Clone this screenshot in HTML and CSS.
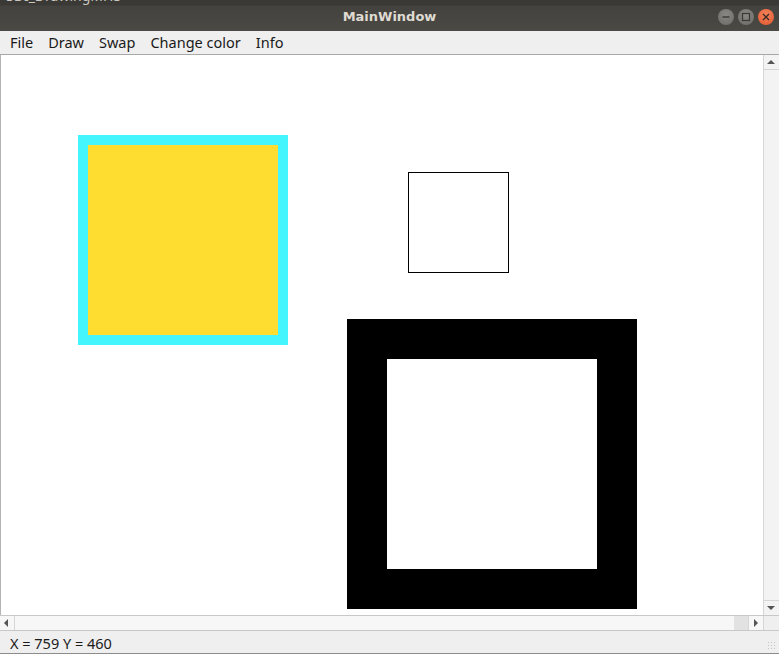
FILE: index.html
```html
<!DOCTYPE html>
<html>
<head>
<meta charset="utf-8">
<link rel="stylesheet" href="styles.css">
</head>
<body>
<div class="window">
  <div class="titlebar">
    <div class="ghost">SDI_DrawingMHS</div>
    <div class="title">MainWindow</div>
    <div class="controls">
      <span class="wbtn min"><svg width="16" height="16" viewBox="0 0 16 16"><line x1="4.5" y1="8" x2="11.5" y2="8" stroke="#3a3935" stroke-width="1.4"/></svg></span>
      <span class="wbtn max"><svg width="16" height="16" viewBox="0 0 16 16"><rect x="4.5" y="4.5" width="7" height="7" fill="none" stroke="#3a3935" stroke-width="1.2"/></svg></span>
      <span class="wbtn close"><svg width="16" height="16" viewBox="0 0 16 16"><path d="M5 5 L11 11 M11 5 L5 11" stroke="#3a2a22" stroke-width="1.4"/></svg></span>
    </div>
  </div>
  <div class="menubar">
    <span class="menu">File</span>
    <span class="menu">Draw</span>
    <span class="menu">Swap</span>
    <span class="menu">Change color</span>
    <span class="menu">Info</span>
  </div>
  <div class="main">
    <div class="canvas">
      <div class="shape cyan"></div>
      <div class="shape small"></div>
      <div class="shape black"></div>
    </div>
    <div class="vscroll">
      <div class="arrow up"></div>
      <div class="track"></div>
      <div class="arrow down"></div>
    </div>
  </div>
  <div class="hrow">
    <div class="hscroll">
      <div class="harrow left"></div>
      <div class="htrack"></div>
      <div class="hthumb"></div>
      <div class="harrow right"></div>
    </div>
    <div class="corner"></div>
  </div>
  <div class="statusbar">
    <span class="status">X = 759 Y = 460</span>
    <span class="grip"></span>
  </div>
  <div class="bottomedge"></div>
</div>
</body>
</html>
```
FILE: styles.css
```css
html, body {
  margin: 0;
  padding: 0;
  width: 779px;
  height: 654px;
  overflow: hidden;
  font-family: "Noto Sans", "DejaVu Sans", sans-serif;
}
.window {
  display: flex;
  flex-direction: column;
  width: 779px;
  height: 654px;
  background: #efefef;
}
.titlebar {
  position: relative;
  height: 31px;
  flex: none;
  background: linear-gradient(#3a3935 0px, #3a3935 5px, #43423e 6px, #4b4944 31px);
  display: flex;
  align-items: center;
  justify-content: center;
  overflow: hidden;
}
.ghost {
  position: absolute;
  left: 6px;
  top: -12px;
  color: #c8c6c0;
  font-size: 14px;
  line-height: 16px;
}
.title {
  color: #dfdbd2;
  font-weight: bold;
  font-size: 13px;
  font-family: "DejaVu Sans", sans-serif;
  margin-top: 2px;
}
.controls {
  position: absolute;
  right: 5px;
  top: 9px;
  display: flex;
  gap: 4px;
}
.wbtn {
  width: 16px;
  height: 16px;
  border-radius: 50%;
  display: block;
  background: radial-gradient(circle at 50% 35%, #8a8883, #6c6a66);
}
.wbtn svg { display: block; }
.wbtn.close {
  background: radial-gradient(circle at 50% 35%, #f4825c, #e2572d);
}
.menubar {
  height: 23px;
  flex: none;
  display: flex;
  align-items: center;
  padding-left: 2.5px;
  background: #efefef;
  border-bottom: 1px solid #a8a8a8;
  font-size: 14.5px;
  color: #1a1a1a;
}
.menu {
  padding: 0 7.5px;
  line-height: 23px;
}
.main {
  flex: none;
  height: 560px;
  display: flex;
}
.canvas {
  position: relative;
  flex: 1;
  background: #ffffff;
  border-left: 1px solid #b4b4b4;
}
.shape { position: absolute; box-sizing: border-box; }
.cyan {
  left: 77px; top: 80px;
  width: 210px; height: 210px;
  border: 10px solid #45f5fd;
  background: #fedd30;
}
.small {
  left: 407px; top: 117px;
  width: 101px; height: 101px;
  border: 1px solid #000;
  background: #fff;
}
.black {
  left: 346px; top: 264px;
  width: 290px; height: 290px;
  border: 40px solid #000;
  background: #fff;
}
.vscroll {
  width: 15px;
  flex: none;
  display: flex;
  flex-direction: column;
  background: #f3f3f3;
  border-left: 1px solid #d6d6d6;
}
.vscroll .track { flex: 1; }
.arrow {
  height: 14px;
  position: relative;
}
.arrow.up { border-bottom: 1px solid #d6d6d6; }
.arrow.down { border-top: 1px solid #d6d6d6; }
.arrow::after {
  content: "";
  position: absolute;
  left: 3px;
  border-left: 4px solid transparent;
  border-right: 4px solid transparent;
}
.arrow.up::after { top: 5px; border-bottom: 4px solid #555; }
.arrow.down::after { top: 5px; border-top: 4px solid #555; }
.hrow {
  height: 14px;
  flex: none;
  display: flex;
  border-top: 1px solid #c8c8c8;
  border-bottom: 1px solid #c8c8c8;
}
.hscroll {
  flex: 1;
  display: flex;
  background: #f7f7f7;
}
.htrack { flex: 1; }
.hthumb { width: 14px; background: #e2e2e2; }
.harrow {
  width: 14px;
  position: relative;
}
.harrow.left { border-right: 1px solid #d6d6d6; }
.harrow.right { border-left: 1px solid #d6d6d6; border-right: 1px solid #d6d6d6; }
.harrow::after {
  content: "";
  position: absolute;
  top: 3px;
  border-top: 4px solid transparent;
  border-bottom: 4px solid transparent;
}
.harrow.left::after { left: 4px; border-right: 4px solid #555; }
.harrow.right::after { left: 5px; border-left: 4px solid #555; }
.corner { width: 15px; background: #efefef; }
.statusbar {
  flex: 1;
  display: flex;
  align-items: center;
  padding-left: 10px;
  font-size: 14.5px;
  color: #1a1a1a;
  position: relative;
}
.status { margin-top: 2px; }
.grip {
  position: absolute;
  right: 2px;
  bottom: 2px;
  width: 10px;
  height: 10px;
  background-image: radial-gradient(circle, #c4c4c4 0.8px, transparent 1px);
  background-size: 3px 3px;
}
.bottomedge {
  height: 4px;
  flex: none;
  background: #8c8c8c;
}
```
